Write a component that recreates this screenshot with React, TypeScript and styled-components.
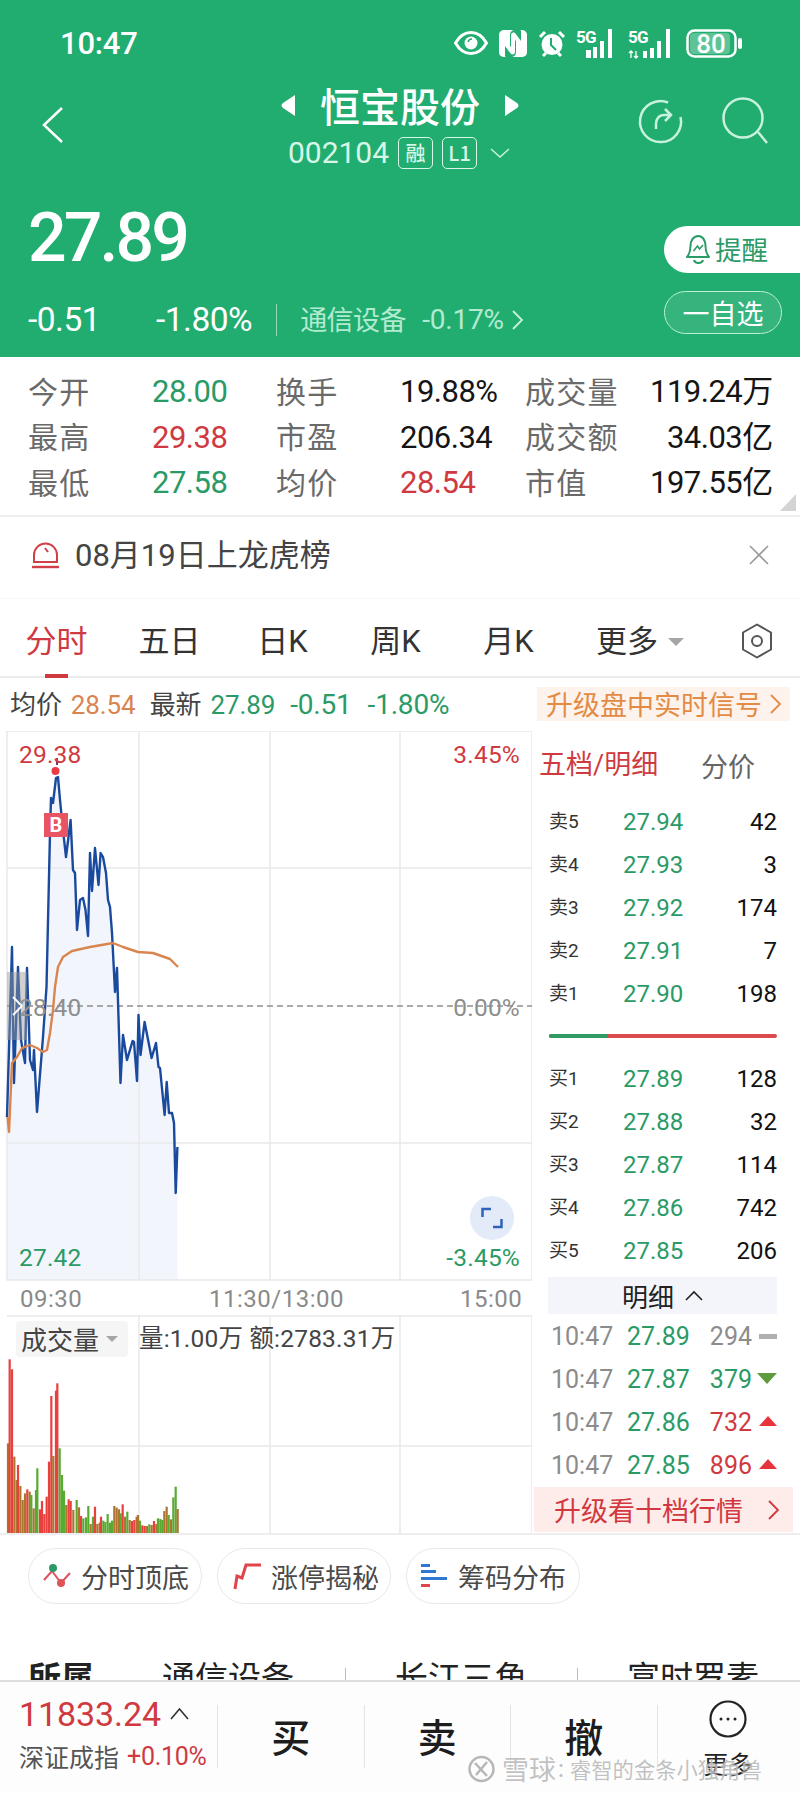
import React from 'react';
import styled, { createGlobalStyle } from 'styled-components';

const NUM = `Roboto, "Noto Sans CJK SC", sans-serif`;
const CJK = `"Noto Sans CJK SC", Roboto, sans-serif`;
const RED = '#cf3a41';
const GREEN = '#2a9a66';
const ORANGE = '#d9854f';
const HEAD = '#21ad70';
const SOFT = '#c9f2de';

const Global = createGlobalStyle`
  html, body { margin: 0; padding: 0; background: #fff; }
  * { box-sizing: border-box; }
  body { font-family: ${CJK}; }
`;

const Page = styled.div`
  position: relative; width: 800px; height: 1793px; overflow: hidden;
  display: flex; flex-direction: column; background: #fff;
`;
const Main = styled.div`height: 1680px; overflow: hidden; flex: none;`;

/* header */
const Header = styled.header`height: 357px; background: ${HEAD}; color: #fff;`;
const StatusBar = styled.div`
  height: 86px; display: flex; align-items: center; justify-content: space-between; padding: 0 58px 0 60px;
`;
const Time = styled.span`font: 500 31px/1 ${NUM}; letter-spacing: -0.2px;`;
const StatusIcons = styled.div`display: flex; align-items: center;`;
const Nav = styled.div`height: 84px; position: relative; display: flex; justify-content: space-between; padding: 0 31px 0 40px;`;
const TitleBlock = styled.div`position: absolute; left: 0; right: 0; top: 0; display: flex; flex-direction: column; align-items: center;`;
const TitleLine = styled.div`height: 38px; display: flex; align-items: center; gap: 24px; font: 500 40px/38px ${CJK};`;
const CodeLine = styled.div`height: 38px; margin-top: 10px; display: flex; align-items: center; color: #d8f6e7; font: 400 30px/1 ${NUM}; margin-left: -2px;`;
const Badge = styled.span`
  width: 35px; height: 32px; margin-left: 9px; border: 1.5px solid #d8f6e7; border-radius: 5px;
  display: inline-flex; align-items: center; justify-content: center; font: 500 20px/1 ${CJK};
`;
const NavRight = styled.div`display: flex; gap: 38px; padding-top: 12px;`;
const BackWrap = styled.div`padding-top: 20px;`;
const HeadBottom = styled.div`margin-top: 43px; display: flex; justify-content: space-between; padding-left: 28px;`;
const Price = styled.div`height: 50px; font: 500 68px/50px ${NUM}; letter-spacing: -2.9px;`;
const ChangeRow = styled.div`margin-top: 39px; height: 36px; display: flex; align-items: center; font: 400 33.5px/1 ${NUM}; letter-spacing: -0.5px;`;
const ChangeVal = styled.span<{ $w: number }>`width: ${p => p.$w}px;`;
const VRule = styled.span`width: 1px; height: 32px; background: #8fdcb7; margin: 0 23px 0 24px;`;
const Sector = styled.span`font: 400 27px/1 ${CJK}; color: #b2ead0; margin-top: -4px;`;
const SectorPct = styled.span`font: 400 28px/1 ${NUM}; color: #b2ead0; margin: 0 8px 0 16px; letter-spacing: -.2px;`;
const PillCol = styled.div`padding-top: 13px; width: 136px;`;
const RemindPill = styled.div`
  height: 47px; background: #fff; border-radius: 24px 0 0 24px; color: ${GREEN};
  display: flex; align-items: center; padding-left: 22px; gap: 4px; font: 400 26.5px/1 ${CJK};
`;
const WatchPill = styled.div`
  margin-top: 18px; width: 118px; height: 43px; border: 1.5px solid #bdeed6; border-radius: 22px; background: #35b47d;
  display: flex; align-items: center; justify-content: center; font: 400 27px/1 ${CJK}; color: #fff;
`;

/* stats */
const Stats = styled.section`
  position: relative; height: 160px; padding: 12px 29px 0 28px; border-bottom: 2px solid #eee;
  display: grid; grid-template-columns: 124px 124px 124px 125px 125px 1fr; grid-auto-rows: 45.5px; align-items: center;
`;
const StatLabel = styled.span`font: 400 30px/1 ${CJK}; color: #6a6a6a; letter-spacing: 1.2px; white-space: nowrap; margin-top: -4px;`;
const StatVal = styled.span<{ $c?: string }>`
  font: 400 31px/1 ${NUM}; letter-spacing: -0.5px; color: ${p => p.$c || '#151515'}; white-space: nowrap;
`;
const StatEnd = styled(StatVal)`text-align: right; justify-self: end;`;
const Corner = styled.div`
  position: absolute; right: 4px; bottom: 4px; width: 0; height: 0;
  border-left: 16px solid transparent; border-bottom: 17px solid #d4d4d4;
`;

/* alert */
const AlertRow = styled.div`
  height: 82px; display: flex; align-items: center; padding: 0 31px 5px 32px; border-bottom: 1px solid #f8f8f8;
  font: 400 31px/1 ${NUM}; color: #444;
`;
const AlertText = styled.span`margin-left: 16px; flex: 1; font-family: ${NUM};`;

/* tabs */
const Tabs = styled.nav`
  position: relative; height: 79px; display: flex; align-items: center; padding-top: 8px; border-bottom: 2px solid #ebebeb;
  font: 400 31px/1 ${NUM}; color: #333;
`;
const Tab = styled.div<{ $active?: boolean }>`
  position: relative; width: 113px; height: 100%; display: flex; align-items: center; justify-content: center;
  color: ${p => (p.$active ? RED : '#333')};
  ${p => p.$active ? `&::after { content: ''; position: absolute; left: 45px; bottom: -2px; width: 23px; height: 4px; background: ${RED}; }` : ''}
`;
const MoreTab = styled.div`
  margin-left: 31px; height: 100%; display: flex; align-items: center; gap: 10px;
`;
const Caret = styled.span<{ $s?: number }>`
  width: 0; height: 0; border-left: ${p => p.$s || 8}px solid transparent; border-right: ${p => p.$s || 8}px solid transparent;
  border-top: ${p => p.$s || 8}px solid #a5a5a5;
`;
const TabGear = styled.div`position: absolute; left: 741px; top: 24px; line-height: 0;`;

/* info */
const InfoRow = styled.div`
  height: 53px; display: flex; align-items: center; padding: 0 10px; font: 400 26px/1 ${NUM}; color: #444; white-space: nowrap;
`;
const InfoItem = styled.span<{ $c?: string; $ml: number }>`
  margin-left: ${p => p.$ml}px; color: ${p => p.$c || '#444'}; letter-spacing: -.1px;
`;
const InfoSigned = styled(InfoItem)`font-size: 28px; letter-spacing: -.2px;`;
const Upsell = styled.div`
  margin-left: auto; width: 253px; height: 34px; margin-top: -2px; background: #fdf3ec; color: #e38b45;
  display: flex; align-items: center; padding-left: 9px; font: 400 27px/1 ${CJK}; gap: 8px;
`;

/* chart */
const ChartRow = styled.div`display: flex; height: 804px; border-bottom: 2px solid #eee;`;
const ChartCol = styled.div`position: relative; width: 532px; height: 804px; flex: none;`;
const ChartSvg = styled.svg`position: absolute; inset: 0; display: block;`;
const Axis = styled.span<{ $x: number; $y: number; $c: string; $end?: boolean }>`
  position: absolute; top: ${p => p.$y - 731 - 13}px;
  ${p => (p.$end ? `right: ${532 - p.$x}px;` : `left: ${p.$x}px;`)}
  font: 400 24.5px/26px ${NUM}; color: ${p => p.$c}; letter-spacing: .2px; white-space: nowrap;
`;
const TimeTick = styled(Axis)`font-size: 24px; letter-spacing: .5px;`;
const BMark = styled.span`
  position: absolute; left: 44px; top: 82px; width: 24px; height: 24px; background: #e85463; color: #fff;
  font: 700 20px/24px ${NUM}; text-align: center;
`;
const Expand = styled.div`
  position: absolute; left: 470px; top: 465px; width: 44px; height: 44px; border-radius: 50%; background: #e4ebf8;
  display: flex; align-items: center; justify-content: center;
`;
const LeftHandle = styled.div`
  position: absolute; left: 7px; top: 241px; width: 20px; height: 68px; background: rgba(150,150,150,.45);
  display: flex; align-items: center; justify-content: center;
`;
const VolTag = styled.div`
  position: absolute; left: 16px; top: 590px; width: 112px; height: 36px; background: #f5f5f5; border-radius: 4px;
  display: flex; align-items: center; padding-left: 5px; gap: 7px; font: 400 26px/1 ${CJK}; color: #444;
`;
const VolStat = styled.span`
  position: absolute; left: 139px; top: 594px; font: 400 24.5px/28px ${NUM}; color: #444; letter-spacing: .2px; white-space: nowrap;
`;

/* book */
const Book = styled.aside`width: 268px; flex: none;`;
const BookHead = styled.div`height: 69px; display: flex; align-items: center; padding: 0 0 0 7px; font: 400 27px/1 ${CJK};`;
const BookTab = styled.span<{ $on?: boolean }>`
  color: ${p => (p.$on ? RED : '#666')}; ${p => (p.$on ? 'width: 162px; font-family: ' + NUM + ';' : '')}
`;
const Quote = styled.div`
  height: 43px; display: grid; grid-template-columns: 74px 60px 1fr; align-items: center; padding: 0 23px 0 17px;
`;
const QLabel = styled.span`font: 400 19px/1 ${NUM}; color: #333;`;
const QPrice = styled.span`font: 400 24px/1 ${NUM}; color: ${GREEN};`;
const QSize = styled.span`font: 400 24px/1 ${NUM}; color: #111; text-align: right;`;
const Balance = styled.div`height: 42px; display: flex; align-items: center; padding: 0 23px 0 17px;`;
const BalanceBar = styled.div`flex: 1; height: 4px; border-radius: 2px; overflow: hidden; display: flex; background: #dc4a4f;`;
const BalanceBuy = styled.div`width: 26%; background: #2f9a63;`;
const DetailBar = styled.div`
  margin: 5px 23px 1px 16px; height: 37px; background: #f4f5fb; display: flex; align-items: center; justify-content: center;
  gap: 11px; font: 400 26px/1 ${CJK}; color: #222;
`;
const Tick = styled.div`
  height: 43px; display: grid; grid-template-columns: 76px 62px 63px 1fr; align-items: center; padding: 0 23px 0 19px;
  font: 400 25px/1 ${NUM};
`;
const TTime = styled.span`color: #8c8c8c;`;
const TPrice = styled.span`color: ${GREEN};`;
const TSize = styled.span<{ $c: string }>`color: ${p => p.$c}; text-align: right;`;
const TMark = styled.span`display: flex; justify-content: flex-end;`;
const Dash = styled.span`width: 18px; height: 5px; background: #b0b0b0;`;
const Down = styled.span`width: 0; height: 0; border-left: 10px solid transparent; border-right: 10px solid transparent; border-top: 11px solid #5f9a3e; margin-top: -3px;`;
const Up = styled.span`width: 0; height: 0; border-left: 9px solid transparent; border-right: 9px solid transparent; border-bottom: 10px solid #e7333c; margin-top: -4px;`;
const UpgradeBar = styled.div`
  margin: 0 7px 0 2px; height: 45px; background: #fdecea; color: #d2383f; display: flex; align-items: center; justify-content: space-between;
  padding: 0 14px 0 20px; font: 400 27px/1 ${CJK};
`;

/* chips */
const Chips = styled.div`display: flex; gap: 15px; padding: 13px 0 0 28px;`;
const Chip = styled.div`
  width: 174px; height: 56px; border: 1.5px solid #e8e8e8; border-radius: 28px; display: flex; align-items: center;
  padding-left: 14px; gap: 10px; font: 400 27px/1 ${CJK}; color: #4a4a4a; white-space: nowrap;
`;
const Info2 = styled.div`
  margin-top: 25px; height: 100px; position: relative;
  font: 400 33px/1 ${CJK}; color: #222;
`;
const SubCell = styled.span<{ $x: number; $bold?: boolean }>`
  position: absolute; left: ${p => p.$x}px; top: 31px; font-weight: ${p => (p.$bold ? 700 : 400)}; white-space: nowrap;
`;
const SubRule = styled.span<{ $x: number }>`position: absolute; left: ${p => p.$x}px; top: 39px; width: 1px; height: 12px; background: #bbb;`;

/* bottom */
const Bottom = styled.footer`
  position: relative; flex: none; height: 113px; border-top: 2px solid #dedede; background: #fdfdfd; display: flex;
`;
const Market = styled.div`width: 217px; flex: none; padding: 14px 0 0 19px;`;
const MarketTop = styled.div`display: flex; align-items: center; height: 36px; gap: 9px; font: 400 34px/1 ${NUM}; color: ${RED}; letter-spacing: -.1px;`;
const MarketSub = styled.div`margin-top: 6px; height: 36px; display: flex; align-items: center; gap: 8px; font: 400 25px/1 ${CJK}; color: #555; white-space: nowrap;`;
const MarketPct = styled.span`font: 400 25px/1 ${NUM}; color: ${RED}; letter-spacing: -.3px;`;
const Action = styled.div`
  margin-top: 23px; width: 146.5px; height: 63px; border-left: 1px solid #e4e4e4; display: flex; align-items: center; justify-content: center;
  font: 500 39px/1 ${CJK}; color: #1d1d1d; padding-bottom: 2px;
`;
const MoreCell = styled.div`
  margin-top: 18px; flex: 1; display: flex; flex-direction: column; align-items: center; font: 400 25px/30px ${CJK}; color: #222; gap: 10px;
  position: relative;
  &::before { content: ''; position: absolute; left: 0; top: 5px; height: 63px; width: 1px; background: #e4e4e4; }
`;
const Watermark = styled.div`
  position: absolute; left: 468px; top: 72px; display: flex; align-items: center; color: rgba(170,170,170,.72); white-space: nowrap;
  text-shadow: 0 0 2px #fff; font: 400 21.3px/30px ${CJK};
`;
const WmBig = styled.span`font-size: 27px; margin-left: 7px;`;
const WmColon = styled.span`font-size: 20px; width: 14px; text-align: center;`;

/* drawings */
const Ic = styled.svg<{ $ml?: number }>`display: block; flex: none; overflow: visible; margin-left: ${p => p.$ml || 0}px;`;

const Eye = () => (
  <Ic width="34" height="26" viewBox="0 0 34 26">
    <path d="M1.500 13C6 5 11 2.500 17 2.500S28 5 32.500 13C28 21 23 23.500 17 23.500S6 21 1.500 13Z" fill="none" stroke="#fff" strokeWidth="3" />
    <circle cx="17" cy="13" r="6.500" fill="#fff" /><path d="M14 12c.5-2 2-3 4-3" stroke={HEAD} strokeWidth="1.500" fill="none" />
  </Ic>
);
const Nfc = () => (
  <Ic $ml={11} width="28" height="29" viewBox="0 0 28 29">
    <path d="M6 1h10c-3 0-5 2-5 5v11c0 1 1 1 1 0V6c0-2 2-3 4-2l6 8V3c0-1 0-2-1-2h1c4 0 6 2 6 5v17c0 3-2 5-6 5H12c3 0 5-2 5-5V12c0-1-1-1-1 0v11c0 2-2 3-4 2L6 17v9c0 1 0 2 1 2H6c-4 0-6-2-6-5V6c0-3 2-5 6-5Z" fill="#fff" />
  </Ic>
);
const Alarm = () => (
  <Ic $ml={11} width="28" height="29" viewBox="0 0 28 29">
    <circle cx="14" cy="15.500" r="10.500" fill="#fff" />
    <path d="M2 8l5-5M26 8l-5-5M5 27l3-3M23 27l-3-3" stroke="#fff" strokeWidth="3" />
    <path d="M13 9v7l5 5" fill="none" stroke={HEAD} strokeWidth="2" />
  </Ic>
);
const Sig1 = () => (
  <Ic $ml={10} width="42" height="29" viewBox="0 0 42 29">
    <text x="0" y="14" fontFamily="Roboto, sans-serif" fontWeight="700" fontSize="17" fill="#fff" letterSpacing="-.8">5G</text>
    <path d="M10 21h5v8h-5zM17 18h4v11h-4zM24 12h4v17h-4zM32 0h4v29h-4z" fill="#fff" />
  </Ic>
);
const Sig2 = () => (
  <Ic $ml={10} width="45" height="29" viewBox="0 0 45 29">
    <text x="0" y="14" fontFamily="Roboto, sans-serif" fontWeight="700" fontSize="17" fill="#fff" letterSpacing="-.8">5G</text>
    <path d="M3 29v-7M1 24l2-2 2 2M8 22v7M6 27l2 2 2-2" stroke="#fff" strokeWidth="1.300" fill="none" />
    <path d="M15 22h4v7h-4zM22 19h4v10h-4zM29 12h4v17h-4zM38 0h4v29h-4z" fill="#fff" />
  </Ic>
);
const Battery = () => (
  <Ic $ml={13} width="56" height="29" viewBox="0 0 56 29">
    <rect x="1.500" y="1.500" width="48" height="26" rx="7" fill="none" stroke="#fff" strokeWidth="2.500" />
    <rect x="4" y="4" width="40" height="21" rx="4" fill="rgba(255,255,255,.28)" />
    <rect x="52" y="9" width="4" height="11" rx="2" fill="#fff" />
    <text x="25" y="23.500" textAnchor="middle" fontFamily="Roboto, sans-serif" fontWeight="500" fontSize="26" fill="#fff">80</text>
  </Ic>
);
const Back = () => (
  <Ic width="24" height="38" viewBox="0 0 24 38"><path d="M22 2L4 19l18 17" fill="none" stroke="#fff" strokeWidth="2.500" /></Ic>
);
const TriL = () => <Ic width="15" height="23" viewBox="0 0 15 23"><path d="M14 1v21L2 14c-2-1.500-2-3.500 0-5z" fill="#fff" /></Ic>;
const TriR = () => <Ic width="15" height="23" viewBox="0 0 15 23"><path d="M1 1v21l12-8c2-1.500 2-3.500 0-5z" fill="#fff" /></Ic>;
const Refresh = () => (
  <Ic width="46" height="46" viewBox="0 0 46 46">
    <path d="M31 4.500A20.500 20.500 0 1 0 43.500 19" fill="none" stroke={SOFT} strokeWidth="2.500" />
    <path d="M19 31v-5c0-5 3-9 8-9h6M28 11l6 6-6 6" fill="none" stroke={SOFT} strokeWidth="2.500" />
  </Ic>
);
const Search = () => (
  <Ic width="48" height="48" viewBox="0 0 48 48">
    <circle cx="22" cy="20" r="19.500" fill="none" stroke={SOFT} strokeWidth="2.500" />
    <path d="M37 34l9 11" stroke={SOFT} strokeWidth="2.500" />
  </Ic>
);
const ChevDown = () => <Ic $ml={13} width="20" height="10" viewBox="0 0 20 10"><path d="M1 1l9 8 9-8" fill="none" stroke={SOFT} strokeWidth="1.500" /></Ic>;
const ChevR = ({ c, h = 20 }: { c: string; h?: number }) => (
  <Ic width="11" height={h} viewBox="0 0 11 20" preserveAspectRatio="none"><path d="M1 1l9 9-9 9" fill="none" stroke={c} strokeWidth="1.800" /></Ic>
);
const Bell = () => (
  <Ic width="25" height="31" viewBox="0 0 25 31">
    <path d="M12.500 2C7 2 4.500 7 4.500 12c0 5-1 8-3.500 11h22c-2.500-3-3.500-6-3.500-11 0-5-2.500-10-7-10Z" fill="none" stroke={GREEN} strokeWidth="2" strokeLinejoin="round" />
    <path d="M8 26c1 4 8 4 9 0" fill="none" stroke={GREEN} strokeWidth="2" />
    <path d="M7.500 17l4-5 2 3 3.500-4" fill="none" stroke={GREEN} strokeWidth="1.600" />
  </Ic>
);
const AlertIcon = () => (
  <Ic width="27" height="28" viewBox="0 0 27 28">
    <path d="M2 21V14a11.500 11.500 0 0 1 23 0v7zM13 7l3 4" fill="none" stroke="#cf4049" strokeWidth="2" />
    <path d="M0 26h27" stroke="#cf4049" strokeWidth="2.400" />
  </Ic>
);
const CloseX = () => <Ic width="20" height="20" viewBox="0 0 20 20"><path d="M1 1l18 18M19 1L1 19" stroke="#9a9a9a" strokeWidth="1.600" /></Ic>;
const Gear = () => (
  <Ic width="32" height="36" viewBox="0 0 32 36">
    <path d="M16 1.500l14 8v17l-14 8-14-8v-17z" fill="none" stroke="#555" strokeWidth="2" strokeLinejoin="round" />
    <circle cx="16" cy="18" r="5" fill="none" stroke="#555" strokeWidth="2" />
  </Ic>
);

const pricePts = '7,1117 12,947 14,1083 18,967 21,1040 25,1063 27,968 30,1060 33,1070 34,1050 37,1112 43,1037 46.500,987 50,833 51,798 53,803 56,778 58,777 60,800 63,830 66,857 70.600,820 73,870 75,873 77,930 80,900 83,898 85.500,910 88,936 90,853 92,891 95,848 98.500,885 100.600,853 103,857 106,873 108,900 110,907 112,933 115,992 117,968 120.500,1083 123,1035 127,1060 132.600,1041 134,1042 137,1081 138.500,1015 140.500,1055 144.600,1022 151.600,1058 156,1043 158.500,1067 160,1068 164.600,1115 166.700,1082 169,1113 172,1113 174,1123 175.700,1193 177.400,1147';
const avgPts = '7.600,1117 9,1132 12,1063 17,1057 22,1048 30,1045 37,1048 43,1052 47,1050 50,1033 53,1010 55,987 58,967 63,957 72,951 90,947 113,943 123,947 138,952 153,953 170,959 178,967';

const vol: [number, number, string][] = [
  [24,430,'b'],[29,178,'r'],[36,208,'r'],[43,470,'b'],[50,540,'b'],[54,495,'r'],[61,558,'b'],[68,600,'b'],[75,580,'b'],[82,568,'r'],[89,575,'b'],[94,585,'g'],[101,625,'b'],[108,570,'g'],[112,505,'g'],[120,628,'r'],[126,603,'r'],[133,642,'r'],[140,590,'r'],[147,485,'r'],[154,288,'r'],[160,468,'b'],[168,272,'r'],[172,250,'r'],[179,445,'g'],[186,525,'g'],[192,572,'g'],[199,615,'b'],[206,598,'r'],[212,603,'r'],[220,630,'b'],[230,600,'g'],[237,622,'b'],[243,648,'r'],[250,655,'g'],[258,652,'g'],[265,618,'g'],[272,672,'b'],[279,650,'g'],[285,620,'r'],[292,672,'b'],[299,668,'b'],[303,650,'r'],[310,662,'g'],[316,666,'g'],[323,642,'g'],[330,668,'g'],[336,662,'g'],[343,618,'b'],[350,623,'b'],[357,628,'b'],[362,640,'g'],[368,613,'r'],[375,650,'b'],[382,635,'g'],[389,660,'b'],[396,663,'r'],[403,660,'r'],[410,650,'b'],[414,645,'b'],[420,662,'g'],[427,676,'r'],[434,678,'r'],[441,678,'b'],[448,673,'g'],[455,675,'b'],[462,663,'r'],[469,672,'b'],[474,655,'g'],[481,657,'g'],[487,660,'g'],[493,633,'b'],[500,620,'b'],[506,645,'g'],[513,658,'b'],[520,592,'g'],[527,560,'g'],[533,627,'b'],
];
const volColor: Record<string, string> = { r: '#e8403c', g: '#58aa32', b: '#ad7430' };

const Chart = () => (
  <ChartSvg width="532" height="804" viewBox="0 731 532 804">
    <path d={`M7 1280V1117L${pricePts.split(' ').join(' L')}V1280Z`} fill="#f3f5fc" />
    <g stroke="#e9e9ec" strokeWidth="1.500" fill="none">
      <path d="M7 731H532V1280H7ZM7 868H532M7 1143H532M139 731V1280M270 731V1280M400 731V1280" />
      <path d="M7 1316H532M7 1446H532M139 1316V1534M270 1316V1534M400 1316V1534M532 1316V1534" />
    </g>
    <path d="M7 1006H532" stroke="#8e8e8e" strokeWidth="1.500" strokeDasharray="6 4" />
    <polyline points={pricePts} fill="none" stroke="#1a4a9e" strokeWidth="2.400" strokeLinejoin="round" />
    <polyline points={avgPts} fill="none" stroke={ORANGE} strokeWidth="2.400" strokeLinejoin="round" />
    <circle cx="55.500" cy="771" r="4" fill="#ea3a46" />
    <path d="M57 758v7" stroke="#7b3a62" strokeWidth="2" />
    {vol.map(([x, t, c], i) => (
      <rect key={i} x={x / 3 - 1.1} y={1300 + t / 3} width="2.200" height={1533 - (1300 + t / 3)} fill={volColor[c]} />
    ))}
  </ChartSvg>
);

const asks: [string, string, string][] = [['卖5','27.94','42'],['卖4','27.93','3'],['卖3','27.92','174'],['卖2','27.91','7'],['卖1','27.90','198']];
const bids: [string, string, string][] = [['买1','27.89','128'],['买2','27.88','32'],['买3','27.87','114'],['买4','27.86','742'],['买5','27.85','206']];

const QuoteRow = ({ r }: { r: [string, string, string] }) => (
  <Quote><QLabel>{r[0]}</QLabel><QPrice>{r[1]}</QPrice><QSize>{r[2]}</QSize></Quote>
);

export default function App() {
  return (
    <Page>
      <Global />
      <Main>
        <Header>
          <StatusBar>
            <Time>10:47</Time>
            <StatusIcons><Eye /><Nfc /><Alarm /><Sig1 /><Sig2 /><Battery /></StatusIcons>
          </StatusBar>
          <Nav>
            <BackWrap><Back /></BackWrap>
            <TitleBlock>
              <TitleLine><TriL />恒宝股份<TriR /></TitleLine>
              <CodeLine>002104<Badge>融</Badge><Badge>L1</Badge><ChevDown /></CodeLine>
            </TitleBlock>
            <NavRight><Refresh /><Search /></NavRight>
          </Nav>
          <HeadBottom>
            <div>
              <Price>27.89</Price>
              <ChangeRow>
                <ChangeVal $w={128}>-0.51</ChangeVal>
                <span>-1.80%</span>
                <VRule />
                <Sector>通信设备</Sector>
                <SectorPct>-0.17%</SectorPct>
                <ChevR c="#c9f2de" />
              </ChangeRow>
            </div>
            <PillCol>
              <RemindPill><Bell />提醒</RemindPill>
              <WatchPill>一自选</WatchPill>
            </PillCol>
          </HeadBottom>
        </Header>

        <Stats>
          <StatLabel>今开</StatLabel><StatVal $c={GREEN}>28.00</StatVal>
          <StatLabel>换手</StatLabel><StatVal>19.88%</StatVal>
          <StatLabel>成交量</StatLabel><StatEnd>119.24万</StatEnd>
          <StatLabel>最高</StatLabel><StatVal $c={RED}>29.38</StatVal>
          <StatLabel>市盈</StatLabel><StatVal>206.34</StatVal>
          <StatLabel>成交额</StatLabel><StatEnd>34.03亿</StatEnd>
          <StatLabel>最低</StatLabel><StatVal $c={GREEN}>27.58</StatVal>
          <StatLabel>均价</StatLabel><StatVal $c={RED}>28.54</StatVal>
          <StatLabel>市值</StatLabel><StatEnd>197.55亿</StatEnd>
          <Corner />
        </Stats>

        <AlertRow>
          <AlertIcon />
          <AlertText>08月19日上龙虎榜</AlertText>
          <CloseX />
        </AlertRow>

        <Tabs>
          <Tab $active>分时</Tab><Tab>五日</Tab><Tab>日K</Tab><Tab>周K</Tab><Tab>月K</Tab>
          <MoreTab>更多<Caret /></MoreTab>
          <TabGear><Gear /></TabGear>
        </Tabs>

        <InfoRow>
          <InfoItem $ml={0}>均价</InfoItem>
          <InfoItem $ml={9} $c={ORANGE}>28.54</InfoItem>
          <InfoItem $ml={14}>最新</InfoItem>
          <InfoItem $ml={9} $c={GREEN}>27.89</InfoItem>
          <InfoSigned $ml={15} $c={GREEN}>-0.51</InfoSigned>
          <InfoSigned $ml={16} $c={GREEN}>-1.80%</InfoSigned>
          <Upsell>升级盘中实时信号<ChevR c="#e38b45" /></Upsell>
        </InfoRow>

        <ChartRow>
          <ChartCol>
            <Chart />
            <Axis $x={19} $y={755} $c={RED}>29.38</Axis>
            <Axis $x={520} $y={755} $c={RED} $end>3.45%</Axis>
            <Axis $x={19} $y={1008} $c="#8e8e8e">28.40</Axis>
            <Axis $x={520} $y={1008} $c="#8e8e8e" $end>0.00%</Axis>
            <Axis $x={19} $y={1258} $c={GREEN}>27.42</Axis>
            <Axis $x={520} $y={1258} $c={GREEN} $end>-3.45%</Axis>
            <TimeTick $x={20} $y={1299} $c="#8a8a8a">09:30</TimeTick>
            <TimeTick $x={209} $y={1299} $c="#8a8a8a">11:30/13:00</TimeTick>
            <TimeTick $x={460} $y={1299} $c="#8a8a8a">15:00</TimeTick>
            <BMark>B</BMark>
            <LeftHandle><ChevR c="#fff" /></LeftHandle>
            <Expand>
              <Ic width="22" height="22" viewBox="0 0 22 22"><path d="M1.500 10V2H10M20.500 12v8H12" fill="none" stroke="#2f62b8" strokeWidth="2.500" /></Ic>
            </Expand>
            <VolTag>成交量<Caret $s={6} /></VolTag>
            <VolStat>量:1.00万 额:2783.31万</VolStat>
          </ChartCol>
          <Book>
            <BookHead><BookTab $on>五档/明细</BookTab><BookTab>分价</BookTab></BookHead>
            {asks.map(r => <QuoteRow key={r[0]} r={r} />)}
            <Balance><BalanceBar><BalanceBuy /></BalanceBar></Balance>
            {bids.map(r => <QuoteRow key={r[0]} r={r} />)}
            <DetailBar>明细<Ic width="18" height="10" viewBox="0 0 18 10"><path d="M1 9l8-8 8 8" fill="none" stroke="#222" strokeWidth="1.600" /></Ic></DetailBar>
            <Tick><TTime>10:47</TTime><TPrice>27.89</TPrice><TSize $c="#8c8c8c">294</TSize><TMark><Dash /></TMark></Tick>
            <Tick><TTime>10:47</TTime><TPrice>27.87</TPrice><TSize $c={GREEN}>379</TSize><TMark><Down /></TMark></Tick>
            <Tick><TTime>10:47</TTime><TPrice>27.86</TPrice><TSize $c={RED}>732</TSize><TMark><Up /></TMark></Tick>
            <Tick><TTime>10:47</TTime><TPrice>27.85</TPrice><TSize $c={RED}>896</TSize><TMark><Up /></TMark></Tick>
            <UpgradeBar>升级看十档行情<ChevR c="#d2383f" /></UpgradeBar>
          </Book>
        </ChartRow>

        <Chips>
          <Chip>
            <Ic width="28" height="28" viewBox="0 0 28 28">
              <path d="M1 18L9 9l9 12 9-10" fill="none" stroke="#e0525a" strokeWidth="2" />
              <circle cx="10" cy="6" r="4" fill="#2a9a66" /><circle cx="18" cy="21" r="4" fill="#e0525a" />
            </Ic>
            分时顶底
          </Chip>
          <Chip>
            <Ic width="29" height="28" viewBox="0 0 29 28">
              <path d="M3 27l2-13 5 2 4-13h15" fill="none" stroke="#e0444c" strokeWidth="3" />
            </Ic>
            涨停揭秘
          </Chip>
          <Chip>
            <Ic width="27" height="28" viewBox="0 0 27 28">
              <path d="M0 2h9v3H0zM0 8h15v3H0zM0 15h26v3H0z" fill="#2f78d0" /><path d="M0 22h9v3H0z" fill="#e0444c" />
            </Ic>
            筹码分布
          </Chip>
        </Chips>

        <Info2>
          <SubCell $x={28} $bold>所属</SubCell>
          <SubCell $x={162}>通信设备</SubCell>
          <SubRule $x={345} />
          <SubCell $x={395}>长江三角</SubCell>
          <SubRule $x={577} />
          <SubCell $x={627}>富时罗素</SubCell>
        </Info2>
      </Main>

      <Bottom>
        <Market>
          <MarketTop>11833.24<Ic width="19" height="12" viewBox="0 0 19 12"><path d="M1 11l8.500-10L18 11" fill="none" stroke="#333" strokeWidth="1.600" /></Ic></MarketTop>
          <MarketSub>深证成指<MarketPct>+0.10%</MarketPct></MarketSub>
        </Market>
        <Action>买</Action>
        <Action>卖</Action>
        <Action>撤</Action>
        <MoreCell>
          <Ic width="38" height="38" viewBox="0 0 38 38">
            <circle cx="19" cy="19" r="17.500" fill="none" stroke="#222" strokeWidth="2.200" />
            <circle cx="12" cy="19" r="1.500" fill="#222" /><circle cx="19" cy="19" r="1.500" fill="#222" /><circle cx="26" cy="19" r="1.500" fill="#222" />
          </Ic>
          更多
        </MoreCell>
        <Watermark>
          <Ic width="27" height="28" viewBox="0 0 27 28">
            <circle cx="13.500" cy="14" r="12" fill="none" stroke="rgba(170,170,170,.85)" strokeWidth="2.500" />
            <path d="M7 8l12 13M19 7L8 20" fill="none" stroke="rgba(170,170,170,.85)" strokeWidth="2.500" />
          </Ic>
          <WmBig>雪球</WmBig><WmColon>：</WmColon>睿智的金条小独角兽
        </Watermark>
      </Bottom>
    </Page>
  );
}
